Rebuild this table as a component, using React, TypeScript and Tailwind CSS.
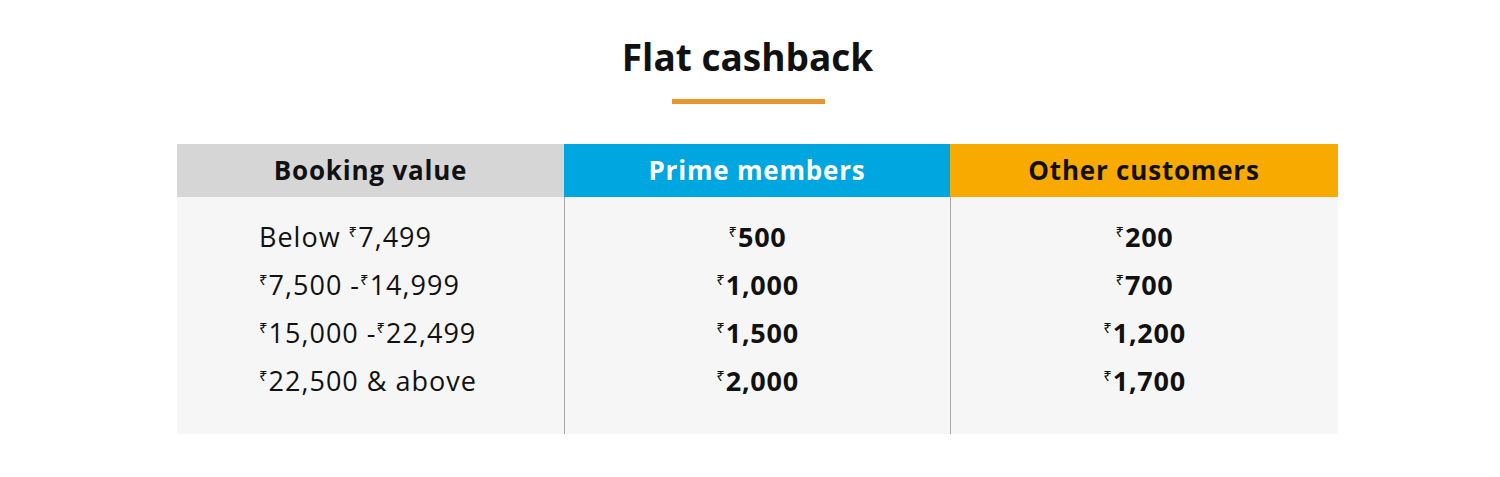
import React from "react";

const R = () => (
  <span className="inline-block align-top text-[15px] leading-none mt-[11px] mr-[1px] font-normal tracking-normal">₹</span>
);

const rows: [React.ReactNode, string, string][] = [
  [<>Below <R />7,499</>, "500", "200"],
  [<><R />7,500 -<R />14,999</>, "1,000", "700"],
  [<><R />15,000 -<R />22,499</>, "1,500", "1,200"],
  [<><R />22,500 &amp; above</>, "2,000", "1,700"],
];

export default function App() {
  return (
    <div className="w-[1500px] h-[477px] bg-white text-[#111] flex flex-col items-center" style={{ fontFamily: '"Open Sans", "Noto Sans", sans-serif' }}>
      <h1 className="mt-[33px] mr-[5px] text-[37px] leading-[48px] font-bold">Flat cashback</h1>
      <div className="mt-[18px] self-start ml-[672px] w-[153px] h-[5px] bg-[#e8962e]" />
      <div className="mt-[40px] self-start ml-[177px] grid grid-cols-[387px_386px_388px]">
        <div className="h-[53px] bg-[#d6d6d6] flex items-center justify-center text-[26px] tracking-[0.8px] font-bold">Booking value</div>
        <div className="h-[53px] bg-[#00a6df] flex items-center justify-center text-[26px] tracking-[0.8px] font-bold text-white">Prime members</div>
        <div className="h-[53px] bg-[#f9aa00] flex items-center justify-center text-[26px] tracking-[0.8px] font-bold">Other customers</div>
        <div className="bg-[#f6f6f6] pt-[16px] pb-[29px] pl-[82px] text-[27px] tracking-[1px]">
          {rows.map((r, i) => (
            <div key={i} className="h-[48px] leading-[48px] whitespace-nowrap">{r[0]}</div>
          ))}
        </div>
        <div className="bg-[#f6f6f6] border-l border-[#a8a8a8] pt-[16px] pb-[29px] text-[27px] tracking-[0.7px] font-bold text-center">
          {rows.map((r, i) => (
            <div key={i} className="h-[48px] leading-[48px]"><R />{r[1]}</div>
          ))}
        </div>
        <div className="bg-[#f6f6f6] border-l border-[#a8a8a8] pt-[16px] pb-[29px] text-[27px] tracking-[0.7px] font-bold text-center">
          {rows.map((r, i) => (
            <div key={i} className="h-[48px] leading-[48px]"><R />{r[2]}</div>
          ))}
        </div>
      </div>
    </div>
  );
}
